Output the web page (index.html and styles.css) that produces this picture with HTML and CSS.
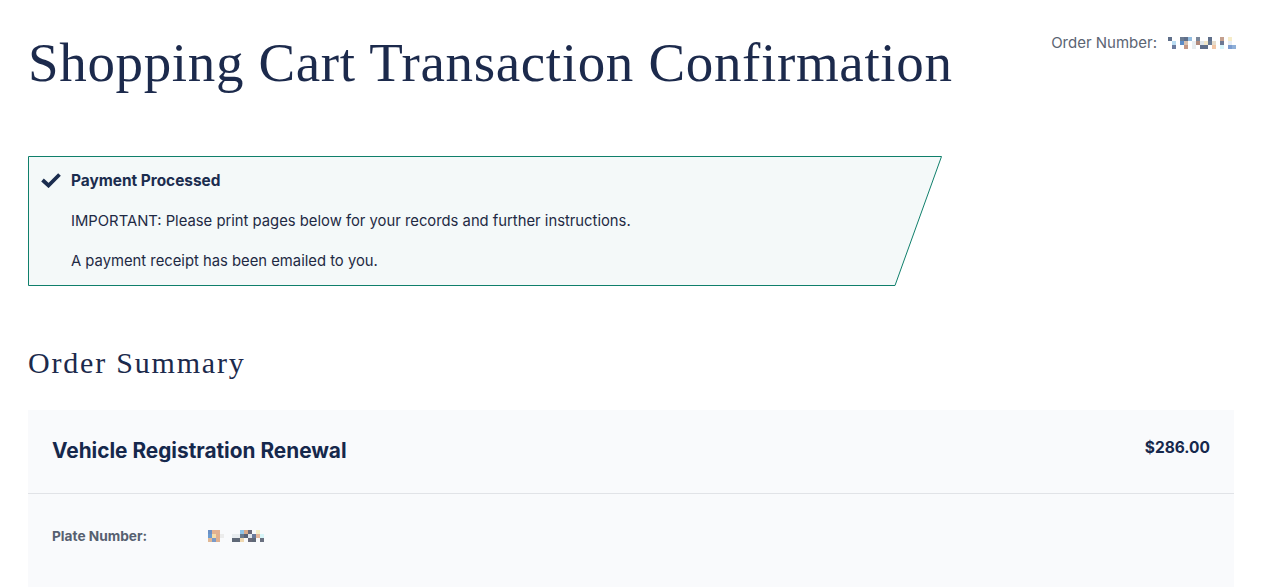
FILE: index.html
```html
<!DOCTYPE html>
<html lang="en">
<head>
<meta charset="utf-8">
<title>Shopping Cart Transaction Confirmation</title>
<link rel="stylesheet" href="styles.css">
</head>
<body>
<div class="page">
  <header class="top">
    <h1 class="title">Shopping Cart Transaction Confirmation</h1>
    <div class="order-no">
      <span class="order-label">Order Number:</span>
      <span class="mosaic order-mosaic">
        <i style="background:#5f6f8a"></i><i></i><i></i><i style="background:#6b7b91"></i><i style="background:#5f6f8a"></i><i style="background:#93bde0"></i><i></i><i style="background:#7a8699"></i><i></i><i></i><i style="background:#5f6f8a"></i><i></i><i></i><i style="background:#c4a08e"></i><i></i><i style="background:#f6ecc8"></i><i></i>
        <i></i><i style="background:#b9dcf2"></i><i></i><i style="background:#5d8cc6"></i><i style="background:#d9c0ad"></i><i></i><i style="background:#e8eef2"></i><i style="background:#b08a7c"></i><i style="background:#dfe5ea"></i><i style="background:#f1e6c8"></i><i style="background:#6a7a94"></i><i style="background:#e6dccb"></i><i></i><i style="background:#6b7893"></i><i></i><i style="background:#e7eef3"></i><i></i>
        <i></i><i style="background:#6b7b9e"></i><i></i><i></i><i style="background:#c49784"></i><i></i><i style="background:#e7ecef"></i><i></i><i style="background:#5f6e8a"></i><i style="background:#5f6e8a"></i><i></i><i style="background:#f2c6a5"></i><i></i><i style="background:#d5f4fa"></i><i></i><i style="background:#7b9cd0"></i><i style="background:#8fb0d8"></i>
      </span>
    </div>
  </header>

  <section class="alert">
    <svg class="alert-shape" viewBox="0 0 914 130" preserveAspectRatio="none" aria-hidden="true">
      <polygon points="0.5,0.5 913.5,0.5 867,129.5 0.5,129.5" fill="#f4f9f9" stroke="#0f7f6b" stroke-width="1"/>
    </svg>
    <div class="alert-body">
      <div class="alert-head">
        <svg class="check" viewBox="0 0 20 16" aria-hidden="true"><path d="M1.5 8 L7.5 13.5 L18.5 2.5" fill="none" stroke="#1b2d4f" stroke-width="3.8" stroke-linejoin="miter" stroke-linecap="butt"/></svg>
        <span>Payment Processed</span>
      </div>
      <p class="alert-text">IMPORTANT: Please print pages below for your records and further instructions.</p>
      <p class="alert-text">A payment receipt has been emailed to you.</p>
    </div>
  </section>

  <h2 class="section-title">Order Summary</h2>

  <section class="card">
    <div class="card-head">
      <h3 class="item-name">Vehicle Registration Renewal</h3>
      <span class="price">$286.00</span>
    </div>
    <div class="card-row">
      <span class="row-label">Plate Number:</span>
      <span class="mosaic plate-mosaic">
        <i style="background:#6a8fc4"></i><i style="background:#e2b191"></i><i style="background:#e2b191"></i><i></i><i></i><i></i><i></i><i></i><i style="background:#8fc4e8"></i><i style="background:#d7a98a"></i><i style="background:#6a6a7a"></i><i></i><i style="background:#f6eec8"></i><i></i>
        <i style="background:#6a9ad0"></i><i style="background:#f5dcaa"></i><i style="background:#e0b090"></i><i style="background:#ececec"></i><i></i><i></i><i style="background:#e8ecef"></i><i style="background:#e8ecef"></i><i style="background:#6a7a8e"></i><i style="background:#5a6376"></i><i style="background:#e0e6ec"></i><i style="background:#6a7a9a"></i><i style="background:#e6b89a"></i><i style="background:#d8f5f8"></i>
        <i style="background:#e0b896"></i><i style="background:#7a9ac8"></i><i style="background:#e0b090"></i><i></i><i></i><i></i><i style="background:#5f6877"></i><i style="background:#5f6877"></i><i style="background:#f0d8b0"></i><i></i><i style="background:#6a6a7a"></i><i style="background:#5f6877"></i><i></i><i style="background:#6a7080"></i>
      </span>
    </div>
  </section>
</div>
</body>
</html>
```

FILE: styles.css
```css
* { box-sizing: border-box; }
html, body { margin: 0; padding: 0; background: #ffffff; }
body {
  font-family: "Inter", "Noto Sans", sans-serif;
  color: #1b2d4f;
}
.page {
  padding: 0 34px 0 28px;
}
.top {
  display: flex;
  justify-content: space-between;
  align-items: flex-start;
}
.title {
  margin: 30px 0 0 0;
  font-family: "Liberation Serif", "Times New Roman", serif;
  font-weight: 400;
  font-size: 55px;
  letter-spacing: 0.65px;
  line-height: 66px;
  color: #1c2a4c;
}
.order-no {
  margin-top: 33px;
  margin-right: -2px;
  display: flex;
  align-items: center;
  gap: 11px;
  font-size: 15px;
  color: #5b6473;
}
.mosaic {
  display: inline-grid;
  grid-auto-rows: 4px;
}
.mosaic i { display: block; }
.order-mosaic { grid-template-columns: repeat(17, 4px); }
.plate-mosaic { grid-template-columns: repeat(14, 4px); }

.alert {
  position: relative;
  width: 914px;
  height: 130px;
  margin-top: 60px;
}
.alert-shape {
  position: absolute;
  inset: 0;
  width: 100%;
  height: 100%;
}
.alert-body {
  position: relative;
  padding: 13px 0 0 13px;
}
.alert-head {
  display: flex;
  align-items: center;
  gap: 10px;
  font-weight: 700;
  font-size: 15.4px;
  height: 22px;
}
.check { width: 20px; height: 16px; }
.alert-text {
  margin: 20px 0 0 30px;
  font-size: 14.8px;
  line-height: 20px;
  color: #1e2a44;
}
.alert-text + .alert-text { margin-top: 20px; }

.section-title {
  margin: 59px 0 0 0;
  font-family: "Liberation Serif", "Times New Roman", serif;
  font-weight: 400;
  font-size: 30px;
  letter-spacing: 1.8px;
  line-height: 36px;
  color: #1c2a4c;
}
.card {
  margin-top: 29px;
  background: #f9fafc;
  min-height: 180px;
}
.card-head {
  display: flex;
  justify-content: space-between;
  align-items: flex-start;
  height: 84px;
  padding: 0 24px;
  border-bottom: 1px solid #e1e3e7;
}
.item-name {
  margin: 28px 0 0 0;
  font-size: 20.8px;
  font-weight: 700;
  color: #16284c;
}
.price {
  margin-top: 28px;
  font-size: 15.5px;
  font-weight: 700;
  color: #16284c;
}
.card-row {
  display: flex;
  align-items: center;
  padding: 34px 24px 0 24px;
}
.row-label {
  width: 156px;
  font-size: 13.7px;
  font-weight: 700;
  color: #566070;
}
```
